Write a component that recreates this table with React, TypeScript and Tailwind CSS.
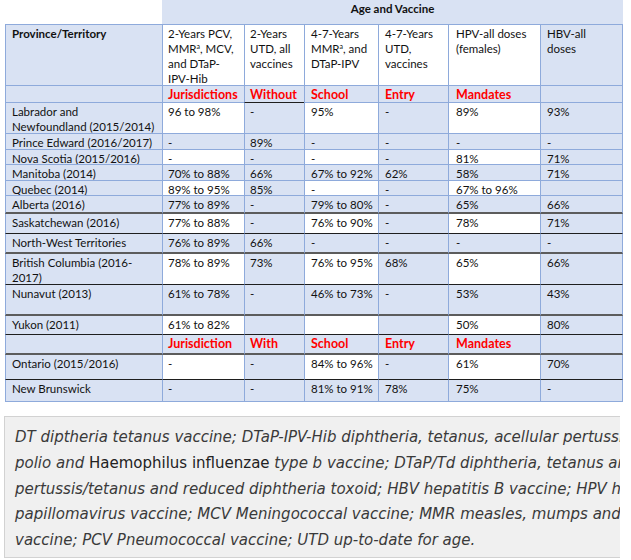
import React from "react";

type Line = "blue" | "black" | "gray";

interface RowDef {
  h: string;
  cells: React.ReactNode[];
  white: number[];
  bottom: Line;
  red?: boolean;
}

const pad = ["pl-[6px]", "pl-[5px]", "pl-[5px]", "pl-[6px]", "pl-[6px]", "pl-[7px]", "pl-[6px]"];

const bottoms: Record<Line, string> = {
  blue: "border-b border-b-[#8eaadb]",
  black: "border-b border-b-[#1e1e1e]",
  gray: "border-b-2 border-b-[#5c5c5c]",
};

const rows: RowDef[] = [
  {
    h: "h-[61px]",
    white: [1, 2, 3, 4, 5],
    bottom: "blue",
    cells: [
      <b>Province/Territory</b>,
      <>2-Years PCV,<br />MMR<sup className="text-[7px]">a</sup>, MCV,<br />and DTaP-<br />IPV-Hib</>,
      <>2-Years<br />UTD, all<br />vaccines</>,
      <>4-7-Years<br />MMR<sup className="text-[7px]">a</sup>, and<br />DTaP-IPV</>,
      <>4-7-Years<br />UTD,<br />vaccines</>,
      <>HPV-all doses<br />(females)</>,
      <>HBV-all<br />doses</>,
    ],
  },
  { h: "h-[17px]", white: [], bottom: "blue", red: true, cells: ["", "Jurisdictions", "Without", "School", "Entry", "Mandates", ""] },
  {
    h: "h-[31px]",
    white: [1, 3, 5],
    bottom: "blue",
    cells: [<>Labrador and<br />Newfoundland (2015/2014)</>, "96 to 98%", "-", "95%", "-", "89%", "93%"],
  },
  { h: "h-[16px]", white: [], bottom: "blue", cells: ["Prince Edward (2016/2017)", "-", "89%", "-", "-", "-", "-"] },
  { h: "h-[15px]", white: [1, 3, 5], bottom: "blue", cells: ["Nova Scotia (2015/2016)", "-", "-", "-", "-", "81%", "71%"] },
  { h: "h-[16px]", white: [], bottom: "blue", cells: ["Manitoba (2014)", "70% to 88%", "66%", "67% to 92%", "62%", "58%", "71%"] },
  { h: "h-[15px]", white: [1, 3, 5], bottom: "blue", cells: ["Quebec (2014)", "89% to 95%", "85%", "-", "-", "67% to 96%", ""] },
  { h: "h-[18px]", white: [], bottom: "gray", cells: ["Alberta (2016)", "77% to 89%", "-", "79% to 80%", "-", "65%", "66%"] },
  { h: "h-[20px]", white: [1, 3, 5], bottom: "black", cells: ["Saskatchewan (2016)", "77% to 88%", "-", "76% to 90%", "-", "78%", "71%"] },
  { h: "h-[20px]", white: [], bottom: "gray", cells: ["North-West Territories", "76% to 89%", "66%", "-", "-", "-", "-"] },
  {
    h: "h-[31px]",
    white: [1, 3, 5],
    bottom: "black",
    cells: [<>British Columbia (2016-<br />2017)</>, "78% to 89%", "73%", "76% to 95%", "68%", "65%", "66%"],
  },
  { h: "h-[31px]", white: [], bottom: "gray", cells: ["Nunavut (2013)", "61% to 78%", "-", "46% to 73%", "-", "53%", "43%"] },
  { h: "h-[19px]", white: [1, 3, 5], bottom: "black", cells: ["Yukon (2011)", "61% to 82%", "", "", "", "50%", "80%"] },
  { h: "h-[20px]", white: [], bottom: "gray", red: true, cells: ["", "Jurisdiction", "With", "School", "Entry", "Mandates", ""] },
  { h: "h-[25px]", white: [1, 3, 5], bottom: "black", cells: ["Ontario (2015/2016)", "-", "-", "84% to 96%", "-", "61%", "70%"] },
  { h: "h-[22px]", white: [], bottom: "blue", cells: ["New Brunswick", "-", "-", "81% to 91%", "78%", "75%", "-"] },
];

function Row({ row, index }: { row: RowDef; index: number }) {
  return (
    <div className={`grid grid-cols-[157px_82px_60px_74px_70px_92px_83px] ${row.h}`}>
      {row.cells.map((c, i) => {
        // the "Without" cell carries a black underline in the scan
        const bottom = index === 1 && i === 2 ? bottoms.black : bottoms[row.bottom];
        return (
          <div
            key={i}
            className={`overflow-hidden whitespace-nowrap border-l border-l-[#8eaadb] pt-[0.5px] ${pad[i]} ${bottom} ${
              i === 6 ? "border-r border-r-[#8eaadb]" : ""
            } ${row.white.includes(i) ? "bg-white" : "bg-[#d9e2f3]"} ${
              row.red ? "text-[12.5px] font-bold leading-[16px] text-[#ff0000]" : "text-[11.5px] leading-[15px] text-[#111]"
            }`}
          >
            {c}
          </div>
        );
      })}
    </div>
  );
}

export default function App() {
  return (
    <div className="h-[560px] w-[631px] overflow-hidden bg-white font-['Lato',sans-serif]">
      {/* Table */}
      <div className="ml-[5px] w-[618px]">
        <div className="flex h-[25px] border-b border-b-[#8eaadb]">
          <div className="w-[157px] bg-white" />
          <div className="flex-1 bg-[#d9e2f3] pt-[0.5px] text-center text-[11.5px] font-bold leading-[15px] text-[#111]">
            Age and Vaccine
          </div>
        </div>
        {rows.map((r, i) => (
          <Row key={i} row={r} index={i} />
        ))}
      </div>

      {/* Abbreviations */}
      <div className="ml-[4px] mt-[14px] h-[142px] w-[616px] overflow-hidden border-b border-l border-t border-[#d2d2d2] bg-[#f0f0f0] pl-[10px] pt-[8px] font-['DejaVu_Sans',sans-serif] text-[15px] leading-[25.75px] text-[#3a3a3a]">
        <div className="whitespace-nowrap italic">
          DT diptheria tetanus vaccine; DTaP-IPV-Hib diphtheria, tetanus, acellular pertussis
        </div>
        <div className="whitespace-nowrap">
          <i>polio and </i>
          <span className="text-[#222]">Haemophilus influenzae</span>
          <i> type b vaccine; DTaP/Td diphtheria, tetanus and</i>
        </div>
        <div className="whitespace-nowrap italic">
          pertussis/tetanus and reduced diphtheria toxoid; HBV hepatitis B vaccine; HPV human
        </div>
        <div className="whitespace-nowrap italic">
          papillomavirus vaccine; MCV Meningococcal vaccine; MMR measles, mumps and
        </div>
        <div className="whitespace-nowrap italic">vaccine; PCV Pneumococcal vaccine; UTD up-to-date for age.</div>
      </div>
    </div>
  );
}
